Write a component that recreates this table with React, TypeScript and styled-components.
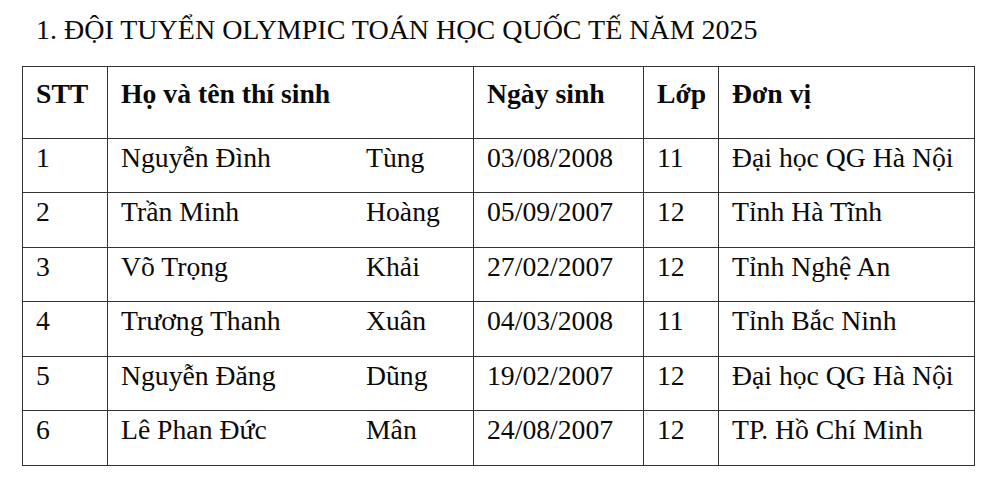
import React from "react";
import styled, { createGlobalStyle } from "styled-components";

const Global = createGlobalStyle`
  html, body { margin: 0; padding: 0; background: #fff; }
  body { font-family: "Liberation Serif", Tinos, "Times New Roman", Times, serif; color: #0a0a0a; }
`;

const serif = `"Liberation Serif", Tinos, "Times New Roman", Times, serif`;

const Page = styled.div`
  width: 1000px;
  height: 480px;
  box-sizing: border-box;
  padding: 14px 0 0 22px;
  overflow: hidden;
  font-family: ${serif};
`;

const Title = styled.h1`
  margin: 0 0 0 14px;
  font-family: ${serif};
  font-weight: 400;
  font-size: 28px;
  line-height: 32px;
  height: 51.5px;
`;

const Table = styled.table`
  border-collapse: collapse;
  table-layout: fixed;
  width: 953px;
  border: 1px solid #555;
  font-family: ${serif};
  font-size: 27.7px;
`;

const Row = styled.tr<{ $head?: boolean }>`
  height: ${(p) => (p.$head ? "72px" : "54.6px")};
`;

const Cell = styled.td<{ $head?: boolean }>`
  border: 1px solid #333;
  vertical-align: top;
  text-align: left;
  padding: ${(p) => (p.$head ? "11px 12px 0 13px" : "3px 12px 0 13px")};
  font-family: ${serif};
  font-weight: ${(p) => (p.$head ? 700 : 400)};
  line-height: 32px;
  white-space: nowrap;
  overflow: hidden;
`;

const Name = styled.div`
  display: grid;
  grid-template-columns: 245px auto;
`;

const cols = [85, 366, 170, 75, 256];

const data = [
  ["1", "Nguyễn Đình", "Tùng", "03/08/2008", "11", "Đại học QG Hà Nội"],
  ["2", "Trần Minh", "Hoàng", "05/09/2007", "12", "Tỉnh Hà Tĩnh"],
  ["3", "Võ Trọng", "Khải", "27/02/2007", "12", "Tỉnh Nghệ An"],
  ["4", "Trương Thanh", "Xuân", "04/03/2008", "11", "Tỉnh Bắc Ninh"],
  ["5", "Nguyễn Đăng", "Dũng", "19/02/2007", "12", "Đại học QG Hà Nội"],
  ["6", "Lê Phan Đức", "Mân", "24/08/2007", "12", "TP. Hồ Chí Minh"],
];

const heads = ["STT", "Họ và tên thí sinh", "Ngày sinh", "Lớp", "Đơn vị"];

export default function App() {
  return (
    <Page>
      <Global />
      <Title>1. ĐỘI TUYỂN OLYMPIC TOÁN HỌC QUỐC TẾ NĂM 2025</Title>
      <Table>
        <colgroup>
          {cols.map((w, i) => (
            <col key={i} style={{ width: w }} />
          ))}
        </colgroup>
        <thead>
          <Row $head>
            {heads.map((h) => (
              <Cell as="th" $head key={h}>
                {h}
              </Cell>
            ))}
          </Row>
        </thead>
        <tbody>
          {data.map((r) => (
            <Row key={r[0]}>
              <Cell>{r[0]}</Cell>
              <Cell>
                <Name>
                  <span>{r[1]}</span>
                  <span>{r[2]}</span>
                </Name>
              </Cell>
              <Cell>{r[3]}</Cell>
              <Cell>{r[4]}</Cell>
              <Cell>{r[5]}</Cell>
            </Row>
          ))}
        </tbody>
      </Table>
    </Page>
  );
}
